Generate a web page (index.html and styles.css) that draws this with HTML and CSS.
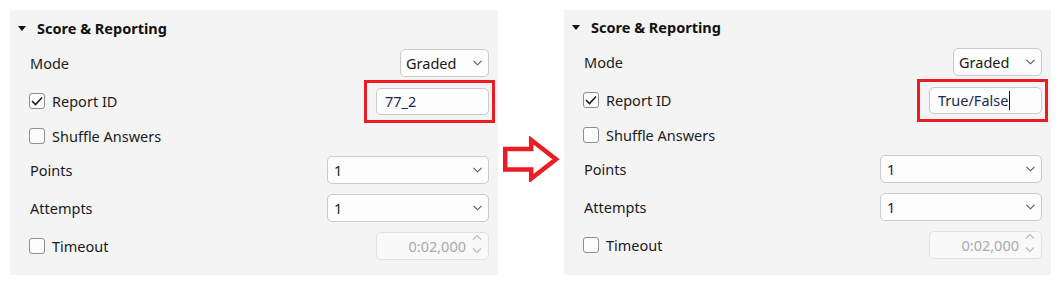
FILE: index.html
```html
<!DOCTYPE html>
<html lang="en">
<head>
  <meta charset="UTF-8" />
  <title>Score &amp; Reporting</title>
  <link rel="stylesheet" href="styles.css">
</head>
<body>
  <div class="page">
    <section class="panel">
      <div class="panel-head">
        <span class="caret"></span>
        <h2>Score &amp; Reporting</h2>
      </div>
      <div class="rows">
        <div class="row">
          <span class="label">Mode</span>
          <div class="select select-mode"><span>Graded</span><svg class="chev" width="9" height="6" viewBox="0 0 9 6"><polyline points="0.5,0.8 4.5,4.8 8.5,0.8" /></svg></div>
        </div>
        <div class="row">
          <label class="check"><span class="box on"><svg width="12" height="10" viewBox="0 0 12 10"><polyline points="1,5 4.5,8.5 11,1.5" /></svg></span>Report ID</label>
          <div class="mark"><div class="field">77_2</div></div>
        </div>
        <div class="row row-short">
          <label class="check"><span class="box"></span>Shuffle Answers</label>
        </div>
        <div class="row">
          <span class="label">Points</span>
          <div class="select select-wide"><span>1</span><svg class="chev" width="9" height="6" viewBox="0 0 9 6"><polyline points="0.5,0.8 4.5,4.8 8.5,0.8" /></svg></div>
        </div>
        <div class="row">
          <span class="label">Attempts</span>
          <div class="select select-wide"><span>1</span><svg class="chev" width="9" height="6" viewBox="0 0 9 6"><polyline points="0.5,0.8 4.5,4.8 8.5,0.8" /></svg></div>
        </div>
        <div class="row">
          <label class="check"><span class="box"></span>Timeout</label>
          <div class="spin"><span>0:02,000</span><span class="spin-btns"><svg width="10" height="20" viewBox="0 0 10 20"><polyline points="1,5.5 5,1.5 9,5.5" /><polyline points="1,14.5 5,18.5 9,14.5" /></svg></span></div>
        </div>
      </div>
    </section>

    <div class="arrow">
      <svg width="60" height="46" viewBox="0 0 60 46">
        <polygon points="4.2,13 30.2,13 30.2,4 55,23.3 30.2,42.6 30.2,33.5 4.2,33.5" />
      </svg>
    </div>

    <section class="panel panel-after">
      <div class="panel-head">
        <span class="caret"></span>
        <h2>Score &amp; Reporting</h2>
      </div>
      <div class="rows">
        <div class="row">
          <span class="label">Mode</span>
          <div class="select select-mode"><span>Graded</span><svg class="chev" width="9" height="6" viewBox="0 0 9 6"><polyline points="0.5,0.8 4.5,4.8 8.5,0.8" /></svg></div>
        </div>
        <div class="row">
          <label class="check"><span class="box on"><svg width="12" height="10" viewBox="0 0 12 10"><polyline points="1,5 4.5,8.5 11,1.5" /></svg></span>Report ID</label>
          <div class="mark"><div class="field">True/False<span class="cursor"></span></div></div>
        </div>
        <div class="row row-short">
          <label class="check"><span class="box"></span>Shuffle Answers</label>
        </div>
        <div class="row">
          <span class="label">Points</span>
          <div class="select select-wide"><span>1</span><svg class="chev" width="9" height="6" viewBox="0 0 9 6"><polyline points="0.5,0.8 4.5,4.8 8.5,0.8" /></svg></div>
        </div>
        <div class="row">
          <span class="label">Attempts</span>
          <div class="select select-wide"><span>1</span><svg class="chev" width="9" height="6" viewBox="0 0 9 6"><polyline points="0.5,0.8 4.5,4.8 8.5,0.8" /></svg></div>
        </div>
        <div class="row">
          <label class="check"><span class="box"></span>Timeout</label>
          <div class="spin"><span>0:02,000</span><span class="spin-btns"><svg width="10" height="20" viewBox="0 0 10 20"><polyline points="1,5.5 5,1.5 9,5.5" /><polyline points="1,14.5 5,18.5 9,14.5" /></svg></span></div>
        </div>
      </div>
    </section>
  </div>
</body>
</html>
```

FILE: styles.css
```css
* {
  box-sizing: border-box;
}

body {
  margin: 0;
  background: #fff;
  font-family: "Noto Sans", "Open Sans", sans-serif;
  font-size: 14.5px;
  color: #1b1b1b;
}

.page {
  display: flex;
  align-items: flex-start;
  padding: 10px 0 0 10px;
}

.panel {
  width: 488px;
  height: 265px;
  background: #f4f4f4;
  padding: 8px 9px 15px 8px;
}

.panel-after {
  width: 487px;
  padding-top: 7px;
}

.panel-head {
  display: flex;
  align-items: center;
  height: 20px;
  gap: 11px;
}

.caret {
  width: 0;
  height: 0;
  border-left: 4.5px solid transparent;
  border-right: 4.5px solid transparent;
  border-top: 5.5px solid #111;
}

.panel-head h2 {
  margin: 0;
  font-size: 14.5px;
  font-weight: 700;
  color: #111;
}

.rows {
  display: flex;
  flex-direction: column;
  gap: 10px;
  margin-top: 11px;
  padding-left: 12px;
}

.row {
  display: flex;
  align-items: center;
  justify-content: space-between;
  height: 28px;
}

.row-short {
  height: 21px;
}

.label {
  line-height: 20px;
}

.check {
  display: flex;
  align-items: center;
  gap: 7px;
  margin-left: -1px;
}

.box {
  width: 16px;
  height: 16px;
  border: 1px solid #8e8e8e;
  border-radius: 3px;
  background: #fdfdfd;
  display: flex;
  align-items: center;
  justify-content: center;
}

.box svg polyline {
  fill: none;
  stroke: #1a1a1a;
  stroke-width: 1.6;
}

.select,
.field,
.spin {
  height: 28px;
  border: 1px solid #cacaca;
  border-radius: 5px;
  background: #fdfdfd;
  display: flex;
  align-items: center;
}

.select {
  justify-content: space-between;
  padding: 0 6px 0 6px;
}

.select-mode {
  width: 89px;
  padding-left: 5px;
}

.select-wide {
  width: 162px;
}

.chev polyline {
  fill: none;
  stroke: #555;
  stroke-width: 1.1;
}

.mark {
  border: 3px solid #ed1c24;
  padding: 5px 3px 5px 9px;
  margin: -8px -6px -8px 0;
}

.field {
  width: 113px;
  height: 27px;
  padding-left: 8px;
  color: #1c2a4a;
}

.cursor {
  display: inline-block;
  width: 1px;
  height: 19px;
  background: #111;
  margin-left: 1px;
}

.spin {
  width: 113px;
  justify-content: flex-end;
  gap: 6px;
  padding-right: 6px;
  border-color: #e2e2e2;
  background: #f9f9f9;
  color: #a9a9a9;
}

.spin-btns svg polyline {
  fill: none;
  stroke: #b9b9b9;
  stroke-width: 1.1;
}

.arrow {
  width: 66px;
  padding: 126px 0 0 3px;
}

.arrow svg polygon {
  fill: #fff;
  stroke: #ed1c24;
  stroke-width: 4.5;
}
```
